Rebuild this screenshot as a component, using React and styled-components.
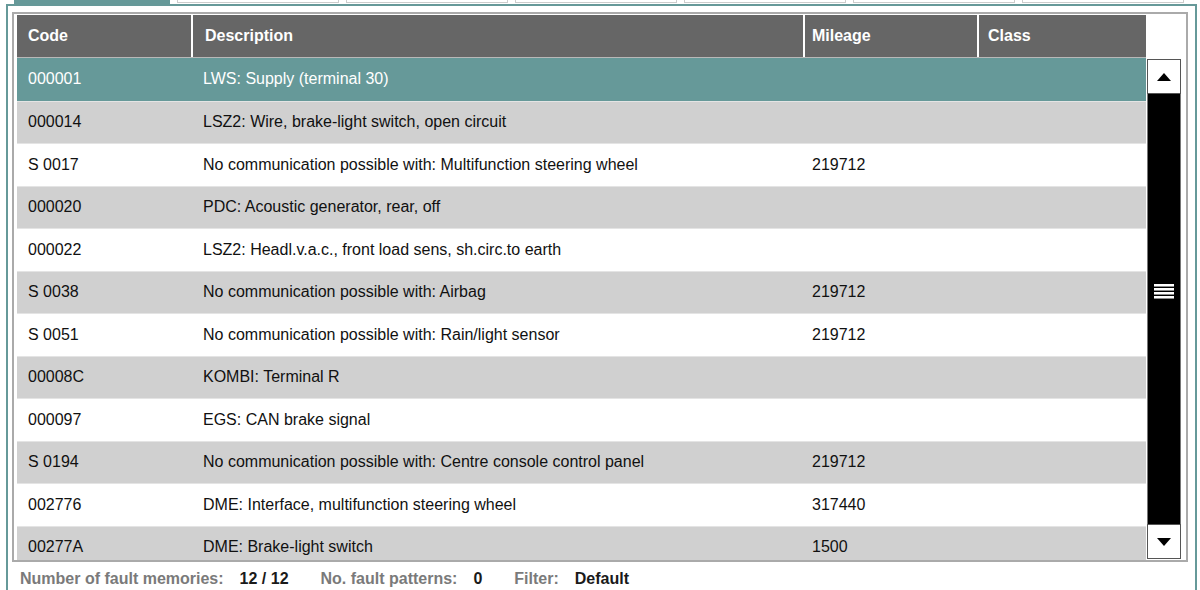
import React from "react";
import styled, { createGlobalStyle } from "styled-components";

const GlobalStyle = createGlobalStyle`
  html, body {
    margin: 0;
    padding: 0;
    background: #ffffff;
    font-family: "Liberation Sans", Arial, sans-serif;
  }
`;

const faults = [
  { code: "000001", text: "LWS: Supply (terminal 30)", mileage: "" },
  { code: "000014", text: "LSZ2: Wire, brake-light switch, open circuit", mileage: "" },
  { code: "S 0017", text: "No communication possible with: Multifunction steering wheel", mileage: "219712" },
  { code: "000020", text: "PDC: Acoustic generator, rear, off", mileage: "" },
  { code: "000022", text: "LSZ2: Headl.v.a.c., front load sens, sh.circ.to earth", mileage: "" },
  { code: "S 0038", text: "No communication possible with: Airbag", mileage: "219712" },
  { code: "S 0051", text: "No communication possible with: Rain/light sensor", mileage: "219712" },
  { code: "00008C", text: "KOMBI: Terminal R", mileage: "" },
  { code: "000097", text: "EGS: CAN brake signal", mileage: "" },
  { code: "S 0194", text: "No communication possible with: Centre console control panel", mileage: "219712" },
  { code: "002776", text: "DME: Interface, multifunction steering wheel", mileage: "317440" },
  { code: "00277A", text: "DME: Brake-light switch", mileage: "1500" },
];

const COLS = "174px 612px 174px 171px";
const PADS = ["11px", "12px", "7px", "9px"];

const Page = styled.div`
  width: 1200px;
  height: 590px;
  overflow: hidden;
  display: flex;
  flex-direction: column;
`;

const TabStrip = styled.div`
  display: flex;
  gap: 7px;
  height: 4px;
  padding-left: 14px;
`;

const Tab = styled.div`
  width: ${(p) => (p.$active ? "156px" : "160px")};
  height: ${(p) => (p.$active ? "6px" : "2px")};
  background: ${(p) => (p.$active ? "#669999" : "#ffffff")};
  border: ${(p) => (p.$active ? "none" : "1px solid #cccccc")};
  border-top: none;
  flex-shrink: 0;
`;

const Panel = styled.div`
  margin-left: 6px;
  width: 1181px;
  flex: 1;
  border: 2px solid #669999;
  border-bottom: none;
  padding: 6px 2px 0 4px;
`;

const Frame = styled.div`
  width: 1171px;
  border: 2px solid #aaaaaa;
  display: grid;
  grid-template-columns: 1131px 38px;
  padding: 1px 0 0 1px;
`;

const Header = styled.div`
  display: grid;
  grid-template-columns: ${COLS};
  height: 42px;
  background: #666666;
  border-bottom: 1px solid #b8b8b8;
  margin-left: 2px;
`;

const HeadCell = styled.div`
  display: flex;
  align-items: center;
  padding-left: ${(p) => p.$pad};
  border-left: ${(p) => (p.$first ? "none" : "2px solid #ffffff")};
  color: #ffffff;
  font-weight: bold;
  font-size: 16px;
`;

const Corner = styled.div`
  background: #ffffff;
`;

const Body = styled.div`
  height: 502px;
  overflow: hidden;
  margin-left: 2px;
`;

const Row = styled.div`
  display: grid;
  grid-template-columns: ${COLS};
  height: 42.5px;
  align-items: center;
  font-size: 16px;
  background: ${(p) =>
    p.$selected ? "#669999" : p.$odd ? "#d0d0d0" : "#ffffff"};
  color: ${(p) => (p.$selected ? "#ffffff" : "#111111")};
  border-top: ${(p) => (p.$selected ? "none" : "1px solid #e4e4e4")};
  box-sizing: border-box;
`;

const Cell = styled.div`
  padding-left: ${(p) => p.$pad};
  white-space: nowrap;
`;

const ScrollCol = styled.div`
  padding: 1px 3px 1px 1px;
  display: flex;
  flex-direction: column;
  height: 500px;
`;

const ScrollButton = styled.div`
  height: 33px;
  border: 1px solid #555555;
  background: #ffffff;
  display: flex;
  align-items: center;
  justify-content: center;
`;

const Track = styled.div`
  flex: 1;
  background: #000000;
  border-left: 1px solid #777777;
  border-right: 1px solid #777777;
  display: flex;
  align-items: center;
  justify-content: center;
`;

const Grip = styled.div`
  display: flex;
  flex-direction: column;
  gap: 1px;
  margin-bottom: 36px;
`;

const GripLine = styled.div`
  width: 20px;
  height: 2px;
  background: #ffffff;
  border-bottom: 1px solid #8a8a8a;
`;

const Footer = styled.div`
  display: flex;
  align-items: center;
  height: 26px;
  padding: 4px 0 0 8px;
  font-size: 16px;
  font-weight: bold;
  white-space: nowrap;
`;

const Label = styled.span`
  color: #7a7a7a;
  margin-right: 16px;
`;

const Value = styled.span`
  color: #1a1a1a;
  margin-right: 32px;
`;

const Arrow = ({ up }) => (
  <svg width="16" height="10" viewBox="0 0 16 10">
    <polygon points={up ? "8,1 15,9 1,9" : "1,1 15,1 8,9"} fill="#000" />
  </svg>
);

export default function App() {
  const heads = ["Code", "Description", "Mileage", "Class"];
  return (
    <Page>
      <GlobalStyle />
      <TabStrip>
        <Tab $active />
        {[0, 1, 2, 3, 4, 5].map((i) => (
          <Tab key={i} />
        ))}
      </TabStrip>
      <Panel>
        <Frame>
          <Header>
            {heads.map((h, i) => (
              <HeadCell key={h} $first={i === 0} $pad={PADS[i]}>
                {h}
              </HeadCell>
            ))}
          </Header>
          <Corner />
          <Body>
            {faults.map((f, i) => (
              <Row key={f.code} $selected={i === 0} $odd={i % 2 === 1}>
                <Cell $pad={PADS[0]}>{f.code}</Cell>
                <Cell $pad="12px">{f.text}</Cell>
                <Cell $pad="9px">{f.mileage}</Cell>
                <Cell $pad="11px" />
              </Row>
            ))}
          </Body>
          <ScrollCol>
            <ScrollButton>
              <Arrow up />
            </ScrollButton>
            <Track>
              <Grip>
                <GripLine />
                <GripLine />
                <GripLine />
                <GripLine />
              </Grip>
            </Track>
            <ScrollButton>
              <Arrow />
            </ScrollButton>
          </ScrollCol>
        </Frame>
        <Footer>
          <Label>Number of fault memories:</Label>
          <Value>12 / 12</Value>
          <Label>No. fault patterns:</Label>
          <Value>0</Value>
          <Label>Filter:</Label>
          <Value>Default</Value>
        </Footer>
      </Panel>
    </Page>
  );
}
